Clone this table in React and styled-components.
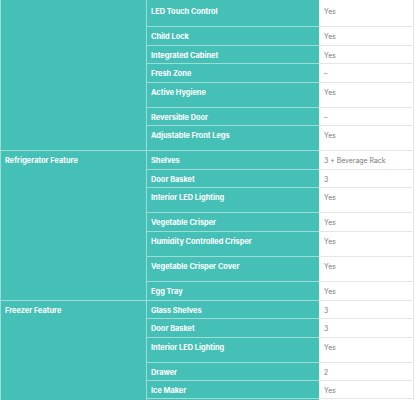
import React from "react";
import styled, { createGlobalStyle } from "styled-components";

const TEAL = "#45c0b6";
const MINT = "#9fdcd6";
const GREY = "#e6e6e6";

const Global = createGlobalStyle`
  html, body { margin: 0; padding: 0; background: #fff; overflow: hidden; }
  * { box-sizing: border-box; }
`;

const Table = styled.div`
  width: 414px;
  display: flex;
  flex-direction: column;
  border-left: 1px solid ${MINT};
  border-right: 1px solid ${GREY};
  font-family: Inter, "Liberation Sans", sans-serif;
`;

const Group = styled.div`
  display: flex;
  align-items: stretch;
`;

const GroupLabel = styled.div`
  width: 146px;
  flex: none;
  background: ${TEAL};
  color: #fff;
  font-weight: 700;
  font-size: 7.4px;
  line-height: 10px;
  padding: 5px 4px;
  border-right: 1px solid ${MINT};
  border-bottom: 1px solid ${MINT};
  white-space: nowrap;
`;

const Rows = styled.div`
  flex: 1;
  display: flex;
  flex-direction: column;
`;

const Row = styled.div`
  display: grid;
  grid-template-columns: 172px 1fr;
  height: ${(p) => p.$h}px;
`;

const Name = styled.div`
  background: ${TEAL};
  color: #fff;
  font-weight: 700;
  font-size: 7.4px;
  line-height: 10px;
  padding: 5px 4px 0;
  border-bottom: 1px solid ${MINT};
  white-space: nowrap;
  overflow: hidden;
`;

const Value = styled.div`
  background: #fff;
  color: #7a7a7a;
  font-weight: 400;
  font-size: 6.9px;
  line-height: 10px;
  padding: 5px 5px 0;
  border-bottom: 1px solid ${GREY};
  white-space: nowrap;
  overflow: hidden;
`;

const groups = [
  {
    label: "",
    rows: [
      ["", "", 2],
      ["LED Touch Control", "Yes", 25],
      ["Child Lock", "Yes", 19],
      ["Integrated Cabinet", "Yes", 18],
      ["Fresh Zone", "–", 19],
      ["Active Hygiene", "Yes", 25],
      ["Reversible Door", "–", 18],
      ["Adjustable Front Legs", "Yes", 25],
    ],
  },
  {
    label: "Refrigerator Feature",
    rows: [
      ["Shelves", "3 + Beverage Rack", 19],
      ["Door Basket", "3", 18],
      ["Interior LED Lighting", "Yes", 25],
      ["Vegetable Crisper", "Yes", 19],
      ["Humidity Controlled Crisper", "Yes", 25],
      ["Vegetable Crisper Cover", "Yes", 25],
      ["Egg Tray", "Yes", 19],
    ],
  },
  {
    label: "Freezer Feature",
    rows: [
      ["Glass Shelves", "3", 18],
      ["Door Basket", "3", 19],
      ["Interior LED Lighting", "Yes", 25],
      ["Drawer", "2", 18],
      ["Ice Maker", "Yes", 18],
      ["", "", 19],
    ],
  },
];

export default function App() {
  return (
    <>
      <Global />
      <Table>
        {groups.map((g, gi) => (
          <Group key={gi}>
            <GroupLabel>{g.label}</GroupLabel>
            <Rows>
              {g.rows.map(([n, v, h], ri) => (
                <Row key={ri} $h={h}>
                  <Name>{n}</Name>
                  <Value>{v}</Value>
                </Row>
              ))}
            </Rows>
          </Group>
        ))}
      </Table>
    </>
  );
}
